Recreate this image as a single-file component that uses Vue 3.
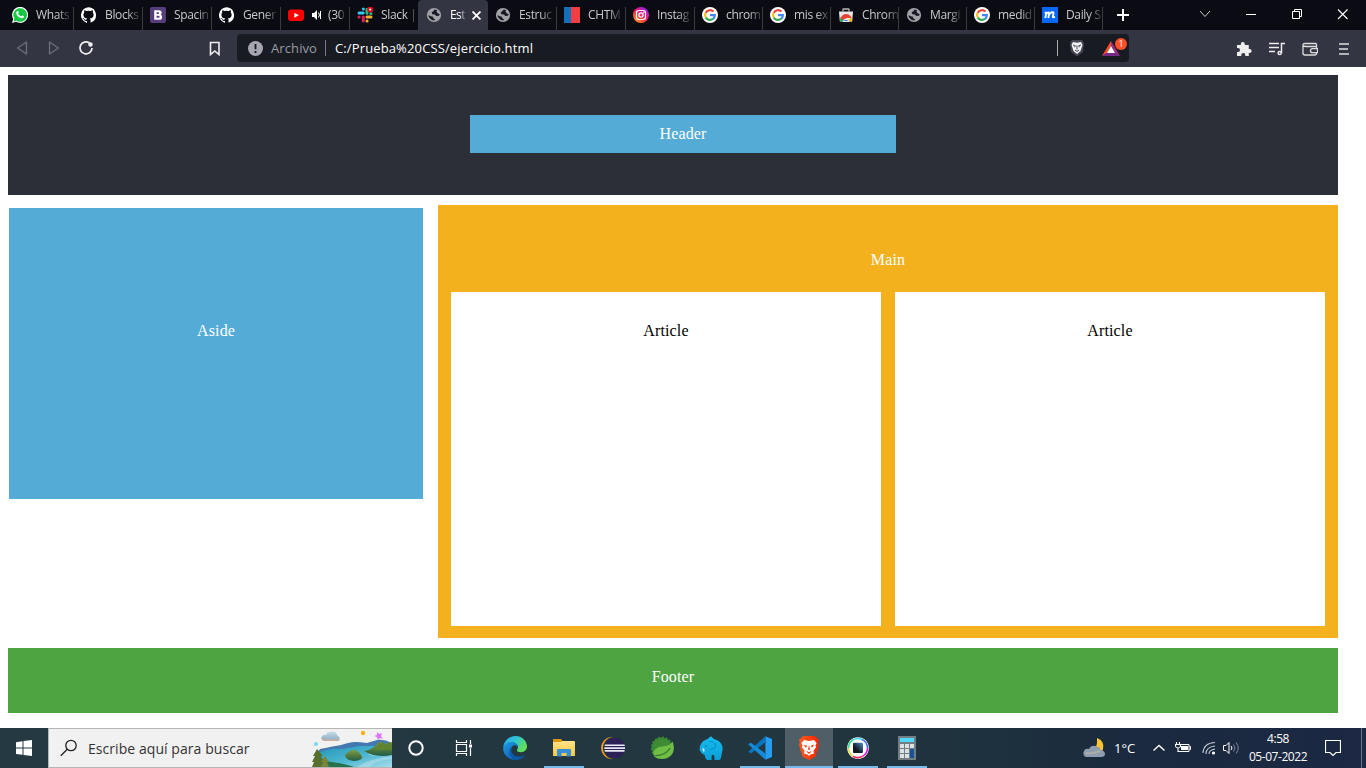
<script setup>
const tabs = [
  { icon: 'whatsapp', label: 'Whats' },
  { icon: 'github', label: 'Blocks' },
  { icon: 'bootstrap', label: 'Spacin' },
  { icon: 'github', label: 'Gener' },
  { icon: 'youtube', label: '(30', audio: true },
  { icon: 'slack', label: 'Slack |' },
  { icon: 'globe', label: 'Est', active: true },
  { icon: 'globe', label: 'Estruc' },
  { icon: 'chtml', label: 'CHTM' },
  { icon: 'instagram', label: 'Instag' },
  { icon: 'google', label: 'chrom' },
  { icon: 'google', label: 'mis ex' },
  { icon: 'store', label: 'Chrom' },
  { icon: 'globe', label: 'Margi' },
  { icon: 'google', label: 'medid' },
  { icon: 'daily', label: 'Daily S' },
]
const apps = [
  { icon: 'edge' },
  { icon: 'explorer', open: true },
  { icon: 'eclipse' },
  { icon: 'spring' },
  { icon: 'elephant' },
  { icon: 'vscode', open: true },
  { icon: 'brave', open: true, active: true },
  { icon: 'picker', open: true },
  { icon: 'calc', open: true },
]
</script>

<template>
  <div class="screen">
    <svg class="sprites" aria-hidden="true">
      <defs>
        <linearGradient id="insta" x1="0" y1="1" x2=".8" y2="0"><stop offset="0" stop-color="#ffc928" /><stop offset=".35" stop-color="#fb5031" /><stop offset=".65" stop-color="#e5168b" /><stop offset="1" stop-color="#7b28e8" /></linearGradient>
        <linearGradient id="edgeTop" x1="0" y1="0" x2="1" y2=".5"><stop offset="0" stop-color="#25a9e8" /><stop offset=".5" stop-color="#2fc5d8" /><stop offset="1" stop-color="#63df55" /></linearGradient>
        <linearGradient id="edgeLow" x1="0" y1="0" x2="1" y2="1"><stop offset="0" stop-color="#1ea0e4" /><stop offset=".6" stop-color="#1267be" /><stop offset="1" stop-color="#114a92" /></linearGradient>
        <linearGradient id="folder" x1="0" y1="0" x2="0" y2="1"><stop offset="0" stop-color="#ffe38c" /><stop offset="1" stop-color="#fac83f" /></linearGradient>
        <linearGradient id="braveRed" x1="0" y1="0" x2="1" y2="0"><stop offset="0" stop-color="#ff5a20" /><stop offset="1" stop-color="#ff2500" /></linearGradient>
        <linearGradient id="eleph" x1="0" y1="0" x2="0" y2="1"><stop offset="0" stop-color="#16bcef" /><stop offset="1" stop-color="#0a9fd8" /></linearGradient>
        <linearGradient id="pick" x1="1" y1="0" x2="0" y2="1"><stop offset="0" stop-color="#5291cb" /><stop offset=".65" stop-color="#101820" /></linearGradient>
        <linearGradient id="water" x1="0" y1="0" x2="1" y2="1"><stop offset="0" stop-color="#2295b8" /><stop offset=".55" stop-color="#4db7d0" /><stop offset="1" stop-color="#a6dceb" /></linearGradient>
        <linearGradient id="hill" x1="0" y1="0" x2="0" y2="1"><stop offset="0" stop-color="#809b3c" /><stop offset="1" stop-color="#235c45" /></linearGradient>
        <linearGradient id="cloud" x1="0" y1="0" x2="0" y2="1"><stop offset="0" stop-color="#c6deea" /><stop offset=".7" stop-color="#9bb6cc" /><stop offset="1" stop-color="#d9ad93" /></linearGradient>
      </defs>
      <symbol id="whatsapp" viewBox="0 0 16 16"><path d="M0 16 1.2 11.9A8 8 0 1 1 4.1 14.8Z" fill="#fff" /><path d="m1.6 14.4.8-2.8a6.8 6.8 0 1 1 2.1 2.1Z" fill="#13c843" /><path d="M5.1 4.2c.5-.4 1-.3 1.2.2l.5 1.2c.1.4-.3.7-.6 1.1.7 1.3 1.6 2.1 3 2.7l.8-.9c.3-.3 1.7.5 1.9.7.3.4-.2 1.5-.9 1.9-1 .5-2.3.2-3.5-.5C6 9.800 4.700 8.200 4.300 6.800c-.2-1 .1-2 .8-2.600Z" fill="#fff" /></symbol>
      <symbol id="github" viewBox="0 0 16 16"><path fill="#fff" d="M8 .2a8 8 0 0 0-2.530 15.590c.4.070.550-.170.550-.380v-1.490c-2.010.370-2.690-.490-2.900-1.080-.310-.8-.850-1.100-1.110-1.240-.280-.150-.680-.520-.010-.530.630-.010 1.080.580 1.230.820.720 1.210 1.870.870 2.330.660.070-.520.280-.870.510-1.070-1.780-.2-3.640-.890-3.640-3.950 0-.870.310-1.590.820-2.150-.080-.2-.360-1.020.080-2.120 0 0 .670-.210 2.200.820a7.500 7.500 0 0 1 4 0c1.530-1.040 2.200-.820 2.200-.820.440 1.100.160 1.920.080 2.120.510.560.820 1.270.820 2.150 0 3.070-1.870 3.750-3.650 3.950.290.250.540.730.540 1.480v2.200c0 .210.150.460.550.380A8 8 0 0 0 8 .2Z" /></symbol>
      <symbol id="bootstrap" viewBox="0 0 16 16"><rect width="16" height="16" rx="2" fill="#563d7c" /><path d="M4.200 3.300h4.500q3 0 3 2.500 0 1.400-1.200 1.900 1.700.4 1.700 2.200 0 2.900-3.300 2.900H4.200V3.300Z" fill="#fff" /><path d="M6.600 5.200h1.600q1 0 1 .9t-1 .9H6.600Zm0 3.500h1.800q1.200 0 1.200 1t-1.200 1.100H6.600Z" fill="#563d7c" /></symbol>
      <symbol id="youtube" viewBox="0 0 16 16"><rect y="2.500" width="16" height="11.500" rx="3" fill="#f00" /><path d="m6.300 5.700 4.600 2.500-4.600 2.500Z" fill="#fff" /></symbol>
      <symbol id="slack" viewBox="0 0 16 16"><g fill="none" stroke-width="3" stroke-linecap="round"><path d="M2 6h4.200M6.400 2v.1" stroke="#36c5f0" /><path d="M10 2.300v4M14 6.400h-.2" stroke="#2eb67d" /><path d="M10 10h4M10 14h.1" stroke="#ecb22e" /><path d="M6.300 10v4M2 10h.1" stroke="#e01e5a" /></g><circle cx="13.200" cy="2.600" r="3" fill="#e80018" /><circle cx="13.200" cy="2.600" r="1.100" fill="#fff" /></symbol>
      <symbol id="globe" viewBox="0 0 16 16"><circle cx="8" cy="8" r="7.100" fill="#a0a2a8" /><path d="M8.700 2.400 7 4.600 5.600 5.600l.8 1.600 2.600.3 1.200 1.500 2.800-.2.700-1.700-1.800-.5-1.500-2 .8-1.300ZM2.500 8l.4 2.200 2.800 2.900 2.500.5 1-1.200-2-1.200-.2-1.500-2.300-.5Z" fill="#181922" /></symbol>
      <symbol id="chtml" viewBox="0 0 16 16"><path d="M0 0h7v16H0Z" fill="#1470b8" /><path d="M7 0h9v16H7Z" fill="#f43e43" /></symbol>
      <symbol id="instagram" viewBox="0 0 16 16"><circle cx="8" cy="8" r="8" fill="url(#insta)" /><rect x="3.500" y="3.500" width="9" height="9" rx="2.400" fill="none" stroke="#fff" stroke-width="1.200" /><circle cx="8" cy="8" r="2.100" fill="none" stroke="#fff" stroke-width="1.200" /><circle cx="10.800" cy="5.300" r=".7" fill="#fff" /></symbol>
      <symbol id="google" viewBox="0 0 16 16"><circle cx="8" cy="8" r="8" fill="#fff" /><g fill="none" stroke-width="2.100"><path d="M11.500 4.600A4.900 4.900 0 0 0 3.700 5.700" stroke="#ea4335" /><path d="M3.700 5.700a5 5 0 0 0 0 4.700" stroke="#fbbc05" /><path d="M3.700 10.400a4.900 4.900 0 0 0 7.600 1.200" stroke="#34a853" /><path d="M8 8.100h4.900q0 2.300-1.600 3.600" stroke="#4285f4" /></g></symbol>
      <symbol id="store" viewBox="0 0 16 16"><path d="M1 4.500h14l-.8 10H1.800Z" fill="#e9e9e9" /><path d="M5 4.500V2.400Q5 2 5.500 2h5q.5 0 .5.400v2.100" fill="none" stroke="#bbb" stroke-width="1.300" /><path d="M8 14.500 3 9.500a6.200 6.200 0 0 0-.8 5Z" fill="#34a853" /><path d="m8 14.500 5.500-4a6.500 6.500 0 0 1 .4 4Z" fill="#fbc116" /><path d="M2.600 11Q4.500 7 8 7q4 0 5.700 4H9l-4 2Z" fill="#e94335" /><path d="M5.100 14.500a3 3 0 0 1 5.800 0Z" fill="#4285f4" stroke="#fff" stroke-width=".8" /></symbol>
      <symbol id="daily" viewBox="0 0 16 16"><path d="M0 0h16v16H0Z" fill="#0868f6" /><path d="M2.700 5.700h1.600L3.300 11M4.100 7.200Q7.700 4 7.100 7L6.300 11M7.200 7.200q3.600-3.200 4.300-1.400.2.500-.7 3.600-.2 1.400 2.200.5" fill="none" stroke="#fff" stroke-width="1.900" /></symbol>
      <symbol id="edge" viewBox="0 0 24 24"><path d="M.3 10.500C1.300 4.300 6.300 0 12.300 0 19 0 24 4.900 24 10.500c0 3.300-2.500 5.700-6.100 5.700-2.700 0-4-1-4-2 0-.6 1.100-1.200 1.100-2.900 0-2.700-2.600-4.800-6-4.800-4.200 0-6.900 2-8.700 4Z" fill="url(#edgeTop)" /><path d="M.3 10.500C1.500 7.800 4.700 6 8.500 6c4.100 0 6.500 2.600 6.500 5.300-.8-1.500-2-2.100-3.300-2.100-2.100 0-3.700 2.500-3.700 5.200 0 4.200 3.600 6.300 8 6.300 2.500 0 4.400-.8 6.200-1.800C20.200 22 16.500 24 12 24 5 24-.8 18 .3 10.500Z" fill="url(#edgeLow)" /><path d="M9 10.500c-5.300 4-1.800 12 4 13.300 3.300.2 7-2 9.200-4.900-7.300 3.700-16 .5-13.200-8.400Z" fill="#0d579f" opacity=".75" /></symbol>
      <symbol id="explorer" viewBox="0 0 24 24"><path d="M1 3.500Q1 3 1.500 3h7.700l1.300 2.200H22v14.500H1Z" fill="#dd970d" /><path d="M1 6h8l1.500-1H22q1 0 1 1v14H1Z" fill="url(#folder)" /><path d="M5 20.500v-6.200Q5 13 6.300 13h11.400q1.300 0 1.300 1.300v6.200h-4.500V17H9.600v3.500Z" fill="#378ed6" /></symbol>
      <symbol id="eclipse" viewBox="0 0 24 24"><circle cx="11" cy="12" r="10.900" fill="#f29a27" /><circle cx="13" cy="12" r="11" fill="#22363f" /><circle cx="13.700" cy="12" r="10.300" fill="#2c2058" /><path d="M4 8.400h19.400l.5 1.700H3.500Zm-.7 2.900H24V13H3.300Zm.2 2.700h20.300l-.5 1.800H4Z" fill="#e9e7f3" /></symbol>
      <symbol id="spring" viewBox="0 0 24 24"><circle cx="12" cy="11.800" r="10.300" fill="#3d8b35" stroke="#34862f" stroke-width="2" stroke-dasharray="2.200 1.500" /><path d="M22.500 5.500c1.600 4 2.400 9.200-1.100 13.600-3.900 4.700-12.400 5.100-16.600 2C.8 16 5.400 11.400 12 10.500c4.700-.6 8.100-1 10.500-5Z" fill="#70bd45" /><path d="M4.500 19.500c6.700.4 12.500-2.600 15.700-7.300" fill="none" stroke="#347c2e" stroke-width="1.200" /></symbol>
      <symbol id="elephant" viewBox="0 0 24 24"><path d="M4.400 5Q8.500 3.800 12 .3q2.500 3 5 3.500 6 2 6.700 9l-1.500 7.800q-.3 3.400-2.400 3.400h-4.200l-.5-5h-2.300l-.3 5H8.200q-2.200-1-2.400-5l-3-1.500L.6 14q0-6 3.800-9Z" fill="url(#eleph)" /><path d="m3.500 12 2 1-.2 3-1.500-1Z" fill="#d2f3ff" /><path d="M10 5.500c5-.8 7.500 3 6.100 5.600-.7 2.200-4 1.500-5.400 3.500" fill="none" stroke="#078ac3" /><circle cx="7" cy="10" r=".8" fill="#086996" /></symbol>
      <symbol id="vscode" viewBox="0 0 24 24"><path d="M17.400.3 24 3.100v17.800l-6.600 2.800Z" fill="#269df1" /><path d="m17.400.3-17 15.100 2.300 2L18 6Z" fill="#0875bd" /><path d="m.4 8.600 2.300-2L18 18l-.6 5.700Z" fill="#158bd7" /></symbol>
      <symbol id="brave" viewBox="0 0 24 24"><path d="M6 0h12l2.200 2.400L22 3.700l-.8 3 .7 2.500-3.400 11.300L12 24l-6.500-3.500L2.100 9.200l.7-2.500-.8-3 1.800-1.300Z" fill="url(#braveRed)" /><path d="m7 4 5 1 5-1 2.600 3.100-1.100 2.200.5 2-2.500 3.400.4 3-3.100.5L12 20l-1.800-1.800-3.100-.5.400-3L5 11.300l.5-2L4.400 7.100Z" fill="#fff" /><path d="m6.600 8.500 4 1.500-1.800 1.500Zm10.800 0-4 1.500 1.800 1.500ZM12 9l1 4.500-1 .6-1-.6Zm-2.800 5.800L12 16.300l2.800-1.500-1.900 2.600h-1.800Z" fill="#ff3a0b" /></symbol>
      <symbol id="picker" viewBox="0 0 24 24"><circle cx="12" cy="12" r="10.800" fill="#fff" /><g fill="none" stroke-width="1.600"><path d="M2.500 12A9.500 9.500 0 0 1 7 3.900" stroke="#28df84" /><path d="M7 3.900a9.500 9.500 0 0 1 9-.4" stroke="#3adbe3" /><path d="M16 3.500A9.500 9.500 0 0 1 21.500 12" stroke="#4c75ef" /><path d="M21.500 12a9.500 9.500 0 0 1-5 8.300" stroke="#dc20e1" /><path d="M16.500 20.300a9.500 9.500 0 0 1-9.500-.1" stroke="#fc3068" /><path d="M7 20.200A9.500 9.500 0 0 1 2.500 12" stroke="#e4df47" /></g><rect x="7" y="6.800" width="10" height="10.200" rx="1" fill="url(#pick)" /></symbol>
      <symbol id="calc" viewBox="0 0 24 24"><path d="M3 0h18v24H3Z" fill="#737d84" /><path d="M5 2h14v4H5Z" fill="#4fd8f5" /><path d="M5 8h4v4H5Zm5 0h4v4h-4Zm5 0h4v4h-4ZM5 13h4v4H5Zm5 0h4v4h-4Zm-5 5h4v4H5Zm5 0h4v4h-4Z" fill="#dce1e4" /><path d="M15 13h4v9h-4Z" fill="#17529d" /></symbol>
    </svg>

    <header class="tabbar">
      <div class="tabs">
        <div v-for="(tab, i) in tabs" :key="i" class="tab" :class="{ active: tab.active, before: i === 5 }">
          <svg class="favicon"><use :href="'#' + tab.icon" /></svg>
          <svg v-if="tab.audio" class="audio" viewBox="0 0 12 12"><path d="M1 4h2l3-3v10L3 8H1Z" fill="#fff" /><path d="M7.500 3.500q2 2.500 0 5M9.500 2v8" fill="none" stroke="#fff" /></svg>
          <span class="label">{{ tab.label }}</span>
          <svg v-if="tab.active" class="close" viewBox="0 0 8 8"><path d="m.5.500 7 7m0-7-7 7" stroke="#fff" stroke-width="1.600" /></svg>
        </div>
      </div>
      <svg class="plus" viewBox="0 0 12 12"><path d="M6 0v12M0 6h12" stroke="#fff" stroke-width="2" /></svg>
      <div class="window-controls">
        <svg viewBox="0 0 46 30"><path d="m18 11 5 5.500 5-5.500" fill="none" stroke="#ccc" /></svg>
        <svg viewBox="0 0 46 30"><path d="M18 14.500h10" stroke="#fff" /></svg>
        <svg viewBox="0 0 46 30"><path d="M18.500 11.500h7v7h-7Zm2-2h7v7h-2m-5-5v-2" fill="none" stroke="#fff" /></svg>
        <svg viewBox="0 0 46 30"><path d="m18 9.500 9.500 9.500m0-9.500L18 19" stroke="#fff" stroke-width="1.100" /></svg>
      </div>
    </header>

    <nav class="toolbar">
      <svg class="nav-icons" viewBox="0 0 100 37"><g fill="none" stroke="#6c6e7a" stroke-width="1.300" stroke-linejoin="round"><path d="M26.500 12v12l-9-6Z" /><path d="M49.500 12v12l9-6Z" /></g><path d="M89.500 13A6 6 0 1 0 92 18" fill="none" stroke="#f0f0f0" stroke-width="1.700" /><circle cx="90.500" cy="14.500" r="2.200" fill="#f0f0f0" /></svg>
      <svg class="bookmark" viewBox="0 0 12 16"><path d="M1.500 1.500h8.500v12L5.750 10 1.500 13.500Z" fill="none" stroke="#eee" stroke-width="1.600" /></svg>
      <div class="address">
        <svg class="info" viewBox="0 0 14 14"><circle cx="7" cy="7" r="7" fill="#a5a6ae" /><path d="M7 2.800v5m0 1.600v1.700" stroke="#191b24" stroke-width="1.700" /></svg>
        <span class="archivo">Archivo</span><i class="divider"></i><span class="url">C:/Prueba%20CSS/ejercicio.html</span>
        <i class="divider shield-line"></i>
        <svg class="shield" viewBox="0 0 16 18"><path d="M3 1h10l2 3-1 9-6 4.500L2 13 1 4Z" fill="#444552" /><path d="m4 3 4 .8L12 3l1.500 3-1 3-1 3L8 15l-3.500-3-1-3-1-3Z" fill="#f4f4f4" /><path d="m4 6 2.500 1-1.300 1m6.800-2L9.500 7l1.300 1M8 6.500v4m-2 .5 2 1.500 2-1.500" fill="none" stroke="#444552" /></svg>
        <div class="rewards"><svg viewBox="0 0 18 15"><path d="m9 0 0 5-4 7-5 3Z" fill="#ff4b28" /><path d="m0 15 5-3h8l5 3Z" fill="#75298c" /><path d="m9 0 9 15-5-3-4-7Z" fill="#a02b80" /><path d="m9 5 4 7H5Z" fill="#fff" /></svg><b>1</b></div>
      </div>
      <div class="toolbar-right">
        <svg viewBox="0 0 16 16"><path d="M1 4h3.800V3a2 2 0 0 1 4 0v1h4v4h.8a2 2 0 0 1 0 4h-.8v3H9.300v-1a2 2 0 0 0-4 0v1H1v-4h1a2 2 0 0 0 0-4H1Z" fill="#eee" /></svg>
        <svg viewBox="0 0 16 16"><g fill="none" stroke="#eee" stroke-width="1.500"><path d="M0 2.500h10M0 6.500h10M0 10.500h6M12.500 12V2.500H16" /><circle cx="10.700" cy="12" r="1.600" /></g></svg>
        <svg viewBox="0 0 16 16"><g fill="none" stroke="#ddd" stroke-width="1.300"><path d="M14.500 6V3.500q0-1-1-1h-11Q1 2.500 1 4v8q0 2 2 2h9.500q2 0 2-2M1 4.500q1 1 3 1h10.500v6.500" /><path d="M15.500 7.700h-5a2 2 0 0 0 0 4h5Z" fill="#333543" /></g></svg>
        <svg viewBox="0 0 16 16"><path d="M4 3h10M4 8h9M4 13h10" stroke="#ddd" stroke-width="1.500" /></svg>
      </div>
    </nav>

    <main class="page">
      <section class="page-header"><div>Header</div></section>
      <div class="columns">
        <aside><span>Aside</span></aside>
        <section class="main-box"><h2>Main</h2><div class="articles"><article>Article</article><article>Article</article></div></section>
      </div>
      <footer>Footer</footer>
    </main>

    <div class="taskbar">
      <div class="start"><svg viewBox="0 0 16 16"><path d="m0 2.300 6.500-1V7.500H0Zm7.500-1.200L16 0v7.500H7.500ZM0 8.500h6.500v6.300L0 13.900Zm7.500 0H16V16l-8.500-1.100Z" fill="#fff" /></svg></div>
      <div class="search">
        <svg class="magnifier" viewBox="0 0 18 18"><circle cx="11" cy="6.500" r="5.200" fill="none" stroke="#222" stroke-width="1.300" /><path d="m7.300 10.300-6.500 6.500" stroke="#222" stroke-width="1.300" /></svg>
        <span>Escribe aquí para buscar</span>
        <svg class="landscape" viewBox="0 0 80 38">
          <path d="M8 20q14-3 21-4 9-3 14-3t12 1l10-3q7-1 15 3v10H5Z" fill="#4379b0" /><path d="M6 24Q17 19 31 20l16-3h33v21H5Z" fill="url(#water)" /><path d="M45 38q12-8 35-11v3Q63 32 57 38ZM55 25l15-2-9 4Z" fill="#b2deea" opacity=".6" />
          <path d="M52 22q8-1 12-6l4-3 4 2 8-2v13q-17 3-28-4Z" fill="url(#hill)" /><path d="m65 18 2-5 2 3 2-4 2 4 5-3 2 3v5H62Z" fill="#5e8432" /><path d="M33 26q5-5 9-5 5 0 8 7 1 3-8 4-9-1-9-6Z" fill="url(#hill)" /><path d="M0 38q10-7 20-5 14 2 22 5Z" fill="#25734b" />
          <path d="m5 20-4 7h2l-3 6h2l-2 5h11l-1-5h2l-3-6h2Z" fill="#58702d" /><path d="m13 27-4 6h2l-2 5h8l-2-5h2Z" fill="#79853a" />
          <path d="M12 12q-4-1-2-5 2-2 4-1 1-4 6-3 4-1 5 3 4 2 2 6Z" fill="url(#cloud)" /><circle cx="51" cy="4" r="2.200" fill="#ffb116" /><circle cx="4" cy="15" r="2" fill="#70dced" /><path d="m65 3 2 2 3-1-1 3 2 3-3-1-2 2-1-3-3-1 3-1Z" fill="#df75f8" />
        </svg>
      </div>
      <div class="task-button"><svg viewBox="0 0 18 18"><circle cx="9" cy="9" r="6.700" fill="none" stroke="#fff" stroke-width="2" /></svg></div>
      <div class="task-button task-view"><svg viewBox="0 0 18 18"><path d="M1.500 1v2.500h10V1M1.500 17v-2.500h10V17M1.500 5.500h10v7h-10ZM15.500 1v4M15.500 9v8" fill="none" stroke="#fff" stroke-width="1.200" /><path d="M14 5.500h3v3h-3Z" fill="#fff" /></svg></div>
      <div class="apps"><div v-for="app in apps" :key="app.icon" class="app" :class="{ open: app.open, active: app.active }"><svg><use :href="'#' + app.icon" /></svg></div></div>
      <div class="tray">
        <svg class="weather" viewBox="0 0 22 20"><path d="M14 0q8 3 6 11-1 5-7 5l-5-2q7-3 6-14Z" fill="#ffc52e" /><path d="M3 19q-4-2-2-6 1-3 5-2 2-4 7-3 4 1 5 4 4 1 4 4t-4 3Z" fill="#8e9eae" /><path d="M3 15q7 1 14-2" fill="none" stroke="#bdb7a4" opacity=".7" stroke-width="2" /></svg>
        <span class="temperature">1°C</span>
        <svg class="chevron" viewBox="0 0 12 8"><path d="m.5 6.500 5.500-5 5.500 5" fill="none" stroke="#fff" stroke-width="1.400" /></svg>
        <svg class="battery" viewBox="0 0 16 14"><path d="M4.500 3.500h9.500v7H4M14.500 5.500h1v3h-1" fill="none" stroke="#fff" /><path d="M6 5h7v4H6Z" fill="#fff" /><path d="M1.500 1v2m3-2v2M.5 3.500h5v2q-2.500 3-5 0Zm2.500 3v4h3" fill="none" stroke="#fff" stroke-width="1.100" /></svg>
        <svg class="wifi" viewBox="0 0 14 14"><g fill="none" stroke="#c1c8d3" stroke-width="1.100"><path d="M1 12Q1.500 2 13 1.500M4 13q0-7 9-8M7 13q0-4 6-5" /></g><circle cx="11.500" cy="12" r="1.600" fill="#fff" /></svg>
        <svg class="volume" viewBox="0 0 16 14"><path d="M.5 4.500H3l3-3v11l-3-3H.5Z" fill="none" stroke="#fff" /><path d="M8 5q2 2 0 4" fill="none" stroke="#fff" /><path d="M10.500 3.500q3 3.500 0 7M13 1.500q4.500 5.500 0 11" fill="none" stroke="#7b8799" /></svg>
        <div class="clock"><span>4:58</span><span>05-07-2022</span></div>
        <svg class="notifications" viewBox="0 0 16 16"><path d="M.5.500h15v12H11L8 15.500 5 12.500H.5Z" fill="none" stroke="#fff" stroke-width="1.200" /></svg>
        <i class="desktop-edge"></i>
      </div>
    </div>
  </div>
</template>

<style>
html, body { margin: 0; overflow: hidden; background: #fff; }
</style>

<style scoped>
* { box-sizing: border-box; }
svg { display: block; flex: none; }
.screen { width: 1366px; height: 768px; display: flex; flex-direction: column; overflow: hidden; font-family: "Open Sans", "Noto Sans", sans-serif; }
.sprites { position: absolute; width: 0; height: 0; }
.tabbar { height: 30px; background: #0b0b14; display: flex; align-items: center; flex: none; }
.tabs { margin-left: 4px; height: 30px; display: grid; grid-template-columns: repeat(6, 69px) 70px 68px 69px 69px repeat(6, 68px); }
.tab { position: relative; display: flex; align-items: center; padding: 0 0 0 8px; }
.tab::after { content: ""; position: absolute; right: -1px; top: 7px; width: 1px; height: 23px; background: #3b3a3e; }
.tab.active { background: #333543; border-radius: 4px 4px 0 0; padding-left: 8px; }
.tab.active + .tab { padding-left: 7px; }
.tab.active::after, .tab.before::after { display: none; }
.favicon { width: 16px; height: 16px; }
.label { margin-left: 8px; white-space: nowrap; color: #c9c9cd; font-size: 12px; line-height: 20px; letter-spacing: -.35px; mask-image: linear-gradient(to right, #000 65%, transparent 110%); }
.audio { width: 12px; height: 12px; margin-left: 7px; }
.audio + .label { margin-left: 5px; }
.active .label { width: 15px; color: #fff; margin-left: 8px; letter-spacing: -.6px; }
.close { width: 9px; height: 9px; margin: 0 0 0 7px; }
.plus { width: 12px; height: 12px; margin-left: 15px; }
.window-controls { display: flex; margin-left: auto; }
.window-controls svg { width: 46px; height: 30px; }
.toolbar { height: 37px; background: #333543; display: flex; align-items: center; flex: none; }
.nav-icons { width: 100px; height: 37px; }
.bookmark { width: 12px; height: 16px; margin-left: 109px; }
.address { width: 892px; height: 28px; margin: -1px 0 0 16px; background: #191b22; border-radius: 4px; display: flex; align-items: center; font-size: 13px; }
.info { width: 15px; height: 15px; margin-left: 11px; }
.archivo { color: #999ca5; margin-left: 8px; width: 47px; letter-spacing: .1px; }
.divider { width: 1px; height: 16px; background: #777981; margin-left: 7px; }
.url { color: #fff; margin-left: 9px; width: 201px; white-space: nowrap; letter-spacing: .13px; }
.shield-line { margin-left: auto; background: #aaa; }
.shield { width: 16px; height: 18px; margin-left: 11px; }
.rewards { position: relative; width: 26px; height: 18px; margin: 0 1px 0 17px; }
.rewards svg { width: 18px; height: 15px; margin-top: 2px; }
.rewards b { position: absolute; left: 13px; top: -1px; width: 12px; height: 12px; border-radius: 6px; background: #ff5129; color: #fff; font: 9px/12px "Open Sans", sans-serif; text-align: center; }
.toolbar-right { display: flex; gap: 17px; margin-left: 107px; }
.toolbar-right svg { width: 16px; height: 16px; }
.page { height: 661px; padding: 8px 28px 0 8px; background: #fff; font: 16px/18px "Liberation Serif", serif; color: #fff; text-align: center; flex: none; letter-spacing: .15px; }
.page-header { height: 120px; padding: 40px 0 0 462px; background: #2c2f38; }
.page-header div { width: 426px; height: 38px; line-height: 38px; background: #54abd5; }
.columns { display: flex; margin-top: 10px; height: 433px; }
aside { width: 414px; height: 291px; margin: 3px 15px 0 1px; background: #54abd5; padding-top: 114px; }
.main-box { width: 900px; height: 433px; padding: 46px 13px 0; background: #f2b11d; }
.main-box h2 { margin: 0; height: 41px; font: inherit; }
.articles { display: grid; grid-template-columns: 430px 430px; gap: 14px; }
article { height: 334px; padding-top: 30px; background: #fff; color: #000; }
footer { height: 65px; margin-top: 10px; padding-top: 20px; background: #4ea441; }
.taskbar { height: 40px; display: flex; background: linear-gradient(90deg, #243942 0, #22363f 60%, #1d303e 75%, #1b2a3e 82%, #1c2844 100%); color: #fff; flex: none; }
.start { width: 48px; display: grid; place-items: center; }
.start svg { width: 16px; height: 16px; }
.search { width: 344px; background: #f1f1f1; border: 1px solid #b5b5b5; border-right: 0; display: flex; align-items: center; color: #333; font-size: 14px; }
.search span { margin-left: 10px; width: 163px; white-space: nowrap; letter-spacing: .06px; }
.magnifier { width: 18px; height: 18px; margin-left: 11px; }
.landscape { width: 80px; height: 38px; margin-left: auto; }
.task-button { width: 48px; display: grid; place-items: center; }
.task-view { margin-right: 3px; }
.task-button svg { width: 18px; height: 18px; }
.apps { display: flex; gap: 1px; }
.app { position: relative; width: 48px; display: grid; place-items: center; }
.app svg { width: 24px; height: 24px; }
.app.open::after { content: ""; position: absolute; left: 4px; right: 4px; bottom: 0; height: 2px; background: #76b9ed; }
.app.active { background: #505e67; }
.app.active::after { left: 0; right: 0; }
.tray { margin-left: 152px; display: flex; align-items: center; flex: 1; }
.weather { width: 22px; height: 20px; }
.temperature { width: 22px; margin-left: 9px; font-size: 13px; letter-spacing: 0; white-space: nowrap; }
.chevron { width: 12px; height: 8px; margin-left: 17px; }
.battery { width: 16px; height: 14px; margin-left: 10px; }
.wifi { width: 14px; height: 14px; margin-left: 11px; }
.volume { width: 16px; height: 14px; margin-left: 7px; }
.clock { width: 62px; margin-left: 8px; display: flex; flex-direction: column; text-align: center; font-size: 12px; line-height: 18px; letter-spacing: -.45px; white-space: nowrap; }
.notifications { width: 16px; height: 16px; margin-left: 16px; }
.desktop-edge { width: 1px; height: 40px; background: #697486; margin: 0 4px 0 auto; }
</style>
